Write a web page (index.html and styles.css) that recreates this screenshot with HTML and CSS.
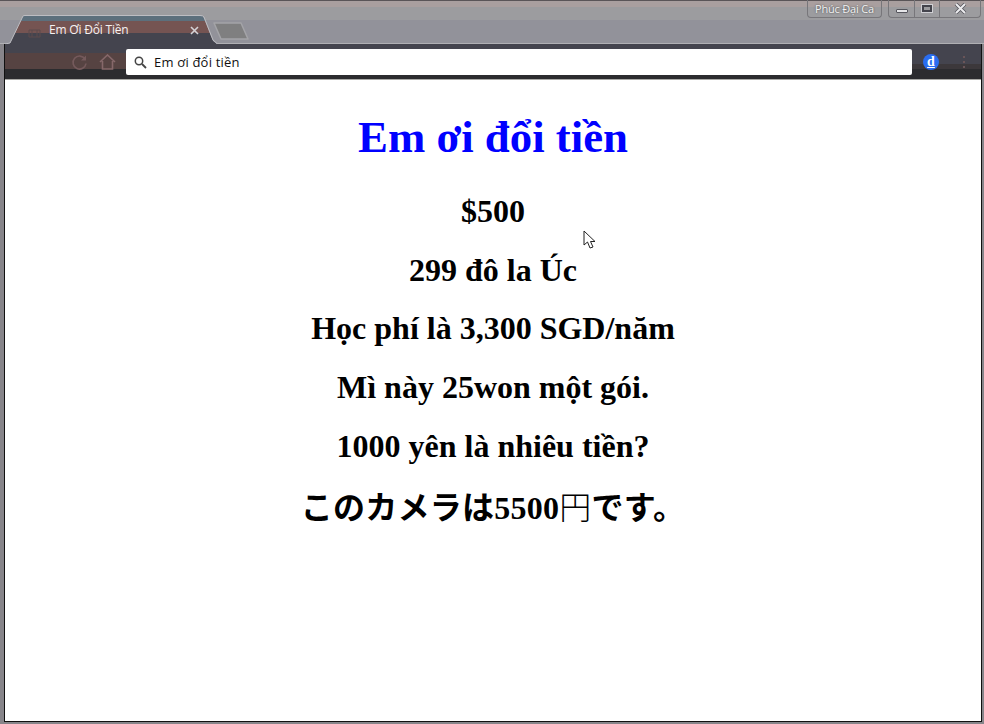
FILE: index.html
```html
<!DOCTYPE html>
<html lang="vi">
<head>
  <meta charset="UTF-8" />
  <title>Em Ơi Đổi Tiền</title>
  <link rel="stylesheet" href="styles.css">
</head>
<body>
  <div class="window">
    <div class="titlebar">
      <div class="tabstrip">
        <div class="tab-wrap">
          <svg class="tab-shape" width="212" height="29" viewBox="0 0 212 29">
            <defs>
              <linearGradient id="tabFill" x1="0" y1="0" x2="0" y2="1">
                <stop offset="0" stop-color="#5c6f7c"/>
                <stop offset="0.17" stop-color="#5c6f7c"/>
                <stop offset="0.17" stop-color="#755452"/>
                <stop offset="0.62" stop-color="#755452"/>
                <stop offset="0.62" stop-color="#44444e"/>
                <stop offset="1" stop-color="#44444e"/>
              </linearGradient>
            </defs>
            <path d="M0 29 L5 28 L18 1 L198 1 L208 26 L212 29 Z" fill="url(#tabFill)"/>
            <path d="M0 29 L5 28 L18 1 Q18.500 0.500 20 0.500 L195 0.500 Q198 0.500 199 2 L208 25 L212 28.500" fill="none" stroke="#bdbdc2" stroke-width="1"/>
          </svg>
          <svg class="tab-favicon" width="13" height="12" viewBox="0 0 13 12">
            <path d="M1 4 H12 V11 H1 Z M4 4 V11 M9 4 V11" fill="none" stroke="#5d4a4c" stroke-width="1"/>
          </svg>
          <span class="tab-title">Em Ơi Đổi Tiền</span>
          <svg class="tab-close" width="9" height="9" viewBox="0 0 9 9">
            <path d="M1 1 L8 8 M8 1 L1 8" stroke="#d5d3d6" stroke-width="1.600"/>
          </svg>
        </div>
        <svg class="new-tab" width="36" height="18" viewBox="0 0 36 18">
          <path d="M1 1 H28 L35 17 H8 Z" fill="#7f7f80" stroke="#a4a4a8" stroke-width="1.500" stroke-linejoin="round"/>
        </svg>
      </div>
      <div class="win-controls">
        <div class="profile">Phúc Đại Ca</div>
        <div class="win-buttons">
          <div class="win-btn win-btn-min"><span class="icon-min"></span></div>
          <div class="win-btn"><span class="icon-max"></span></div>
          <div class="win-btn win-btn-close">
            <svg width="13" height="11" viewBox="0 0 13 11">
              <path d="M2 1 L11 10 M11 1 L2 10" stroke="#55555c" stroke-width="3.600"/>
              <path d="M2 1 L11 10 M11 1 L2 10" stroke="#ececee" stroke-width="2"/>
            </svg>
          </div>
        </div>
      </div>
    </div>

    <div class="toolbar">
      <svg class="tool-icon reload" width="17" height="17" viewBox="0 0 17 17">
        <path d="M14 5 A6.500 6.500 0 1 0 15 9.500" fill="none" stroke="#755a5c" stroke-width="1.600"/>
        <path d="M15 1.500 V6.500 H10 Z" fill="#755a5c"/>
      </svg>
      <svg class="tool-icon home" width="17" height="16" viewBox="0 0 17 16">
        <path d="M1 8 L8.500 1 L16 8 M3.500 7 V15 H13.500 V7" fill="none" stroke="#86686a" stroke-width="1.600"/>
      </svg>
      <div class="omnibox">
        <svg width="13" height="13" viewBox="0 0 13 13">
          <circle cx="5" cy="5" r="3.700" fill="none" stroke="#444" stroke-width="1.500"/>
          <path d="M8 8 L12 12" stroke="#444" stroke-width="1.800"/>
        </svg>
        <span class="omnibox-text">Em ơi đổi tiền</span>
      </div>
      <div class="ext-badge">d</div>
      <div class="menu-dots"><span></span><span></span><span></span></div>
    </div>

    <div class="page">
      <h1 class="page-title">Em ơi đổi tiền</h1>
      <h2 class="line">$500</h2>
      <h2 class="line">299 đô la Úc</h2>
      <h2 class="line">Học phí là 3,300 SGD/năm</h2>
      <h2 class="line">Mì này 25won một gói.</h2>
      <h2 class="line">1000 yên là nhiêu tiền?</h2>
      <h2 class="line line-ja" lang="ja">このカメラは5500<span class="thin">円</span>です。</h2>
      <svg class="cursor" width="14" height="20" viewBox="0 0 14 20">
        <path d="M1 1 V15 L4.500 12 L7 18 L10 17 L7.500 11.500 H12 Z" fill="#fff" stroke="#222" stroke-width="1"/>
      </svg>
    </div>
  </div>
</body>
</html>
```

FILE: styles.css
```css
html, body {
  margin: 0;
  padding: 0;
}

body {
  width: 984px;
  height: 724px;
  overflow: hidden;
  background: #fff;
}

.window {
  box-sizing: border-box;
  width: 984px;
  height: 724px;
  display: flex;
  flex-direction: column;
  background: #87858a;
  padding: 0 2px 2px 4px;
}

.titlebar {
  box-sizing: border-box;
  height: 44px;
  flex: none;
  margin: 0 -2px 0 -4px;
  padding: 0 2px 0 4px;
  display: flex;
  justify-content: space-between;
  background: linear-gradient(#5a5558 0, #5a5558 1px, #a99f9f 1px, #a99f9f 7px, #9c9c9f 7px, #9c9c9f 20px, #92929a 20px);
  border-bottom: 1px solid #b0b0b4;
}

.tabstrip {
  display: flex;
  align-items: flex-start;
  padding-top: 15px;
  padding-left: 1px;
}

.tab-wrap {
  position: relative;
  width: 212px;
  height: 29px;
}

.tab-shape {
  position: absolute;
  left: 0;
  top: 0;
}

.tab-favicon {
  position: absolute;
  left: 23px;
  top: 11px;
}

.tab-title {
  position: absolute;
  left: 44px;
  top: 7px;
  font: 12px/16px "Open Sans", "Noto Sans", sans-serif;
  letter-spacing: -0.2px;
  color: #f4f2f2;
  white-space: nowrap;
}

.tab-close {
  position: absolute;
  left: 185px;
  top: 11px;
}

.new-tab {
  margin: 7px 0 0 -4px;
}

.win-controls {
  display: flex;
  align-items: flex-start;
  gap: 6px;
  padding-right: 1px;
}

.profile {
  box-sizing: border-box;
  width: 75px;
  height: 18px;
  border: 1px solid #77767a;
  border-top: 0;
  border-radius: 0 0 4px 4px;
  font: 11px/17px "Open Sans", "Noto Sans", sans-serif;
  letter-spacing: -0.2px;
  text-align: center;
  color: #f2f2f2;
  text-shadow: 0 0 2px #444;
}

.win-buttons {
  display: flex;
  height: 18px;
  box-sizing: border-box;
  border: 1px solid #77767a;
  border-top: 0;
  border-radius: 0 0 4px 4px;
}

.win-btn {
  box-sizing: border-box;
  width: 25px;
  display: flex;
  align-items: center;
  justify-content: center;
  border-left: 1px solid #77767a;
}

.win-btn-min {
  width: 25px;
  border-left: 0;
}

.win-btn-close {
  width: 41px;
}

.icon-min {
  display: block;
  box-sizing: border-box;
  width: 12px;
  height: 4px;
  margin-top: 5px;
  background: #e6e6e8;
  border: 1px solid #55555c;
  border-radius: 1px;
}

.icon-max {
  display: block;
  box-sizing: border-box;
  width: 10px;
  height: 7px;
  border: 2px solid #44444c;
  outline: 1px solid #d0d0d4;
}

.toolbar {
  box-sizing: border-box;
  height: 36px;
  flex: none;
  display: flex;
  align-items: center;
  padding-left: 66px;
  background:
    linear-gradient(#44444e 0, #44444e 9px, #564342 9px, #564342 25px, #2c2c2f 25px, #2c2c2f 35px, #a9a9a6 35px) left top / 125px 100% no-repeat,
    linear-gradient(#44444e 0, #44444e 20px, #3c383b 20px, #3c383b 25px, #2c2c2f 25px, #2c2c2f 35px, #a9a9a6 35px);
  border-left: 1px solid #111;
  border-right: 1px solid #111;
}

.tool-icon {
  flex: none;
}

.reload {
  margin-right: 11px;
}

.home {
  margin-right: 10px;
}

.omnibox {
  box-sizing: border-box;
  width: 786px;
  height: 26px;
  padding-left: 8px;
  display: flex;
  align-items: center;
  gap: 7px;
  background: #fff;
  border-radius: 2px;
}

.omnibox-text {
  font: 13px/16px "Open Sans", "Noto Sans", sans-serif;
  letter-spacing: 0.2px;
  color: #111;
}

.ext-badge {
  width: 16px;
  height: 16px;
  margin-left: 11px;
  border-radius: 50%;
  background: #2a6df0;
  color: #fff;
  font: bold 14px/15px "Liberation Serif", serif;
  text-decoration: underline;
  text-align: center;
}

.menu-dots {
  display: flex;
  flex-direction: column;
  gap: 3px;
  margin-left: 24px;
}

.menu-dots span {
  display: block;
  width: 2px;
  height: 2px;
  background: #6a5558;
}

.page {
  position: relative;
  flex: 1;
  background: #fff;
  border-left: 1px solid #111;
  border-right: 1px solid #111;
  border-bottom: 1px solid #111;
  font-family: "Liberation Serif", "Noto Sans CJK JP", serif;
  color: #000;
  text-align: center;
  padding-top: 31px;
}

.page-title {
  margin: 0 0 30px;
  font-size: 44.800px;
  line-height: 52px;
  color: #0000ff;
}

.line {
  margin: 0 0 21.700px;
  font-size: 32px;
  line-height: 37px;
}

.line-ja {
  line-height: 45px;
  letter-spacing: 0.25px;
}

.thin {
  font-weight: 200;
}

.cursor {
  position: absolute;
  left: 578px;
  top: 150px;
}
```
